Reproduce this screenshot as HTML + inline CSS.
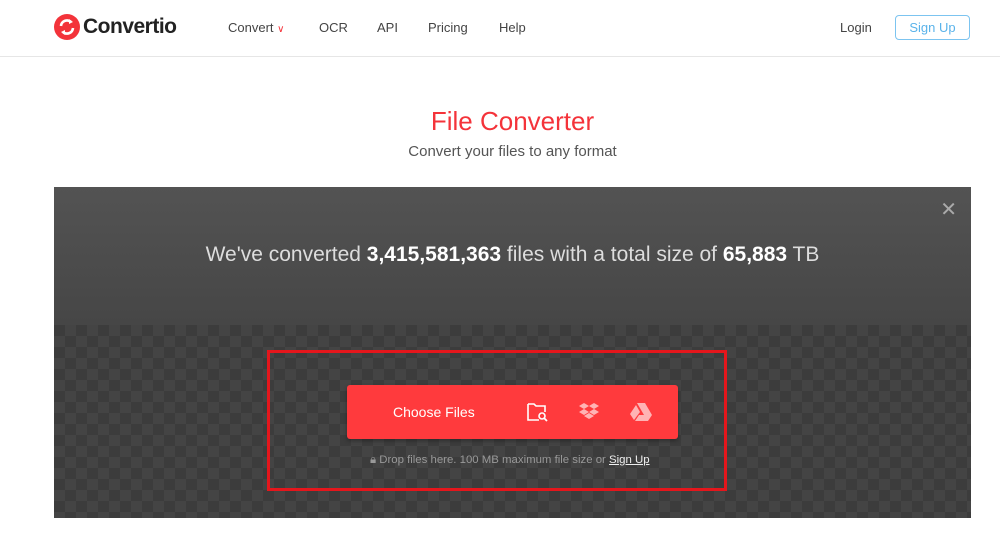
<!DOCTYPE html>
<html><head><meta charset="utf-8"><style>
*{margin:0;padding:0;box-sizing:border-box}
body{width:1000px;height:545px;background:#fff;font-family:"Liberation Sans",sans-serif;position:relative;overflow:hidden}
.hdr{height:57px;border-bottom:1px solid #e6e6e6;position:relative}
.logo{position:absolute;left:54px;top:14px;display:flex;align-items:center}
.logo span{font-size:21px;font-weight:bold;color:#222;margin-left:3px;letter-spacing:-0.5px}
.nav{position:absolute;top:20px;font-size:13px;color:#444}
.su{position:absolute;left:895px;top:15px;width:75px;height:25px;border:1px solid #7cc4f0;border-radius:4px;color:#5ab3ea;font-size:13px;text-align:center;line-height:23px}
h1{position:absolute;top:106px;width:100%;text-align:center;color:#f4333a;font-weight:normal;font-size:26px;padding-left:25px}
.sub{position:absolute;top:143px;width:100%;text-align:center;color:#555;font-size:15px;padding-left:25px}
.box{position:absolute;left:54px;top:187px;width:917px;height:331px;overflow:hidden}
.top{height:138px;background:linear-gradient(#535353,#464646);color:#ddd;font-size:21px;text-align:center;padding-top:56px}
.top b{color:#fff}
.bot{height:193px;background-color:#3c3c3c;background-image:linear-gradient(45deg,#444 25%,transparent 25%,transparent 75%,#444 75%),linear-gradient(45deg,#444 25%,transparent 25%,transparent 75%,#444 75%);background-size:22px 22px;background-position:0 0,11px 11px}
.x{position:absolute;right:14px;top:10px;color:#aaa;font-size:20px}
.frame{position:absolute;left:267px;top:350px;width:460px;height:141px;border:3px solid #e5161c}
.btn{position:absolute;left:347px;top:385px;width:331px;height:54px;background:#ff3a3d;border-radius:3px;box-shadow:0 2px 4px rgba(0,0,0,.3)}
.btn .t{position:absolute;left:46px;top:19px;color:#fff;font-size:14px}
.drop{position:absolute;top:454px;left:370px;color:#999;font-size:11.4px}
.drop u{color:#eee}
</style></head><body>
<div class="hdr">
<div class="logo"><svg width="26" height="26" viewBox="0 0 26 26"><circle cx="13" cy="13" r="13" fill="#f3333a"/><path d="M7 12a6 6 0 0 1 10-4" stroke="#fff" stroke-width="2.6" fill="none"/><path d="M15 5l4 3-4 2z" fill="#fff"/><path d="M19 14a6 6 0 0 1-10 4" stroke="#fff" stroke-width="2.6" fill="none"/><path d="M11 21l-4-3 4-2z" fill="#fff"/></svg><span>Convertio</span></div>
<div class="nav" style="left:228px">Convert <span style="color:#f4333a;font-size:10px">&#8744;</span></div>
<div class="nav" style="left:319px">OCR</div>
<div class="nav" style="left:377px">API</div>
<div class="nav" style="left:428px">Pricing</div>
<div class="nav" style="left:499px">Help</div>
<div class="nav" style="left:840px">Login</div>
<div class="su">Sign Up</div>
</div>
<h1>File Converter</h1>
<div class="sub">Convert your files to any format</div>
<div class="box">
<div class="top">We've converted <b>3,415,581,363</b> files with a total size of <b>65,883</b> TB</div>
<div class="bot"></div>
<div class="x">&#10005;</div>
</div>
<div class="frame"></div>
<div class="btn"><div class="t">Choose Files</div>
<svg style="position:absolute;left:180px;top:17px" width="22" height="20" viewBox="0 0 22 20"><path d="M1 2h6l2 2h9v6M1 2v16h11" stroke="#fff" stroke-width="1.6" fill="none"/><circle cx="15" cy="14" r="3" stroke="#fff" stroke-width="1.6" fill="none"/><path d="M17 16l3 3" stroke="#fff" stroke-width="1.8"/></svg>
<svg style="position:absolute;left:231px;top:17px" width="22" height="20" viewBox="0 0 22 20" fill="#ffb3b4"><path d="M6 1l5 3-5 3-5-3zM16 1l5 3-5 3-5-3zM6 7l5 3-5 3-5-3zM16 7l5 3-5 3-5-3zM11 11l5 3-5 3-5-3z"/></svg>
<svg style="position:absolute;left:283px;top:17px" width="22" height="19" viewBox="0 0 22 19" fill="#ffb3b4"><path d="M7 1h8l7 12h-8zM6 3l4 7-6 8-4-6zM9 13h13l-4 6H5z"/></svg>
</div>
<div class="drop">&#128274;&#xFE0E; Drop files here. 100 MB maximum file size or <u>Sign Up</u></div>
</body></html>
